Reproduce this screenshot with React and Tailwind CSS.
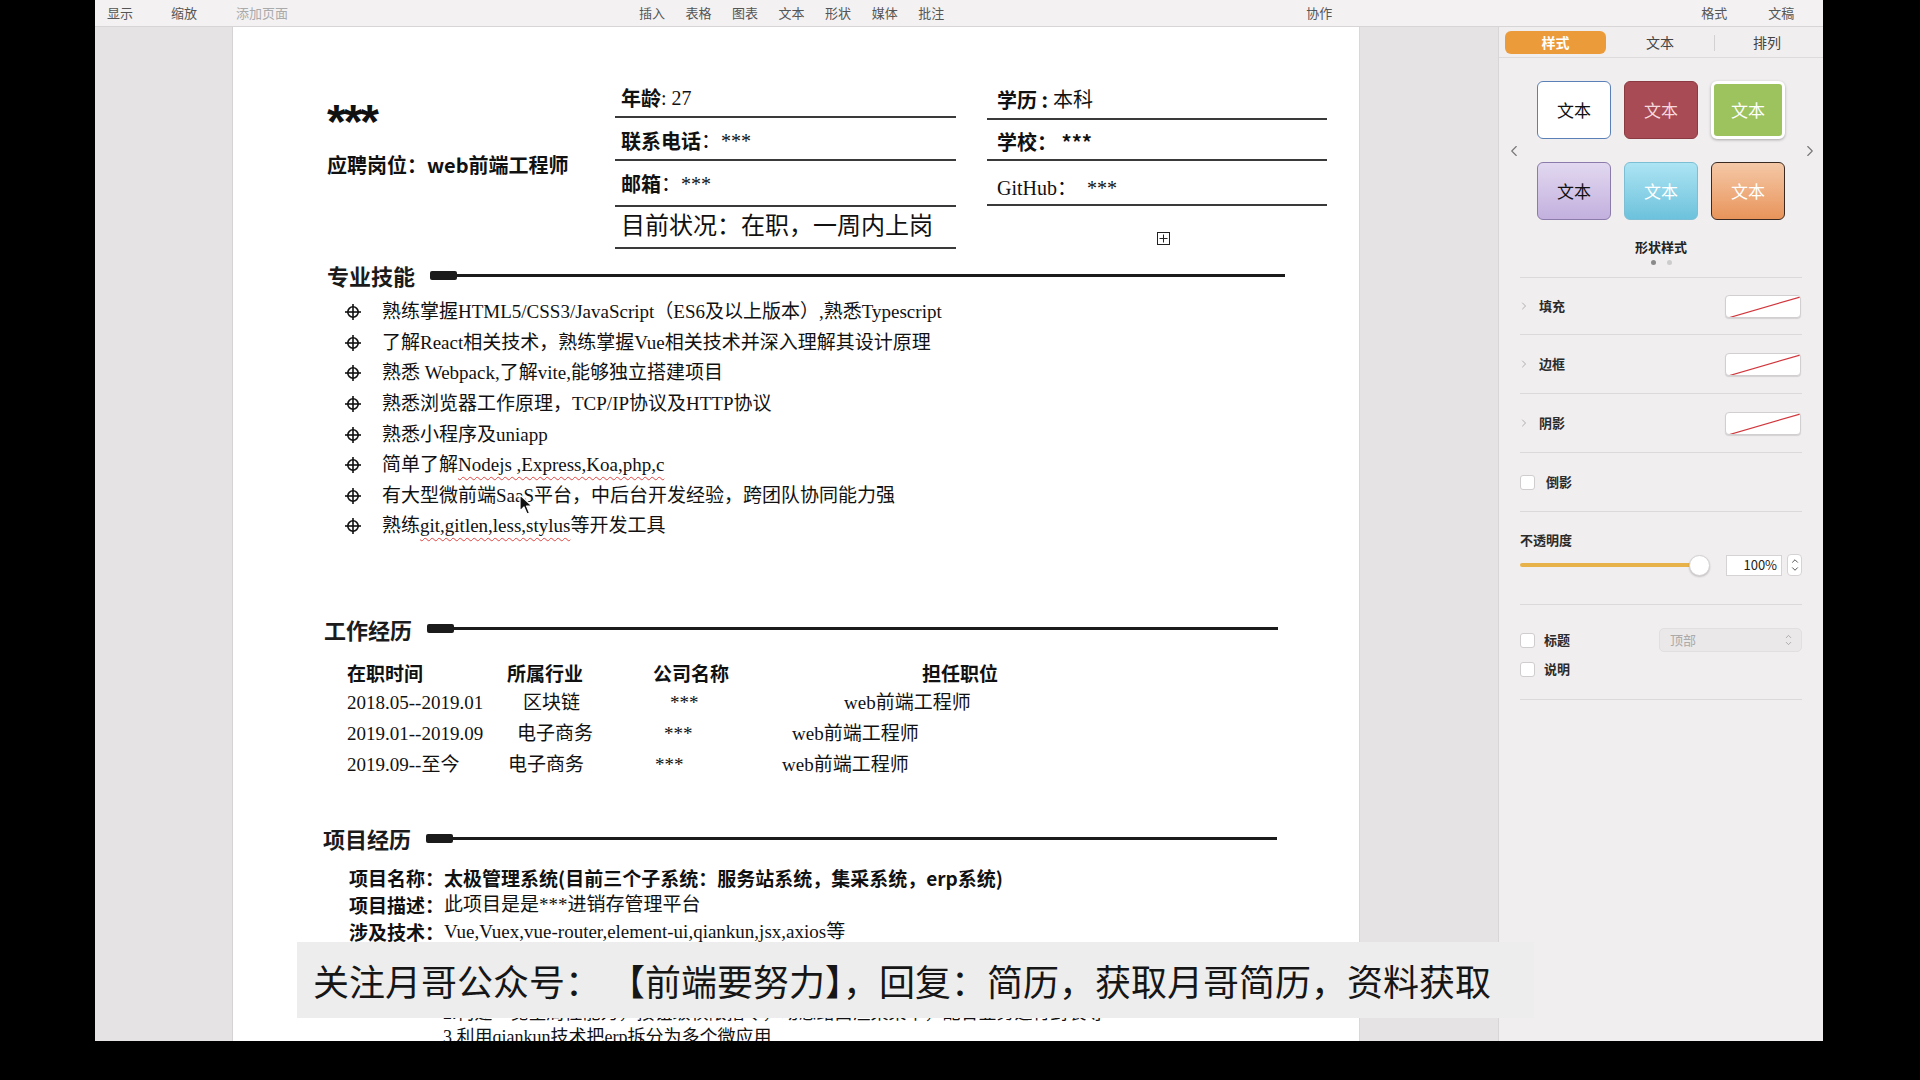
import React from "react";
import { ChevronLeft, ChevronRight, ChevronUp, ChevronDown } from "lucide-react";

const sans = "font-['Noto_Sans_CJK_SC',sans-serif]";
const serif = "font-['Liberation_Serif','Noto_Sans_CJK_SC',serif]";
const wavy = "underline decoration-wavy decoration-[#e0433f] decoration-1 underline-offset-[5px]";

const Bullet = () => (
  <svg width="18" height="18" viewBox="0 0 18 18" className="shrink-0">
    <circle cx="9" cy="9" r="5.2" fill="none" stroke="#111" strokeWidth="1.6" />
    <line x1="1" y1="9" x2="17" y2="9" stroke="#111" strokeWidth="1.6" />
    <line x1="9" y1="1" x2="9" y2="17" stroke="#111" strokeWidth="1.6" />
  </svg>
);

const SectionTitle = ({ title, ml, lineEnd }) => (
  <div className={`flex items-center h-[30px] ${ml}`}>
    <span className={`${sans} text-[22px] font-bold text-[#1b1b1b] leading-[30px]`}>{title}</span>
    <div className="ml-[15px] w-[27px] h-[9px] rounded-[2px] bg-[#1b1b1b]"></div>
    <div className={`h-[3px] bg-[#1b1b1b] ${lineEnd}`}></div>
  </div>
);

const Toolbar = () => (
  <div className={`h-[27px] shrink-0 bg-[#f3f1f2] border-b border-[#d8d5d6] flex items-center pl-[12px] text-[13px] text-[#555] ${sans}`}>
    <span>显示</span>
    <span className="ml-[38px]">缩放</span>
    <span className="ml-[39px] text-[#aaa]">添加页面</span>
    <div className="ml-[351px] flex gap-[20.5px]">
      <span>插入</span>
      <span>表格</span>
      <span>图表</span>
      <span>文本</span>
      <span>形状</span>
      <span>媒体</span>
      <span>批注</span>
    </div>
    <span className="ml-[362px]">协作</span>
    <span className="ml-[369px]">格式</span>
    <span className="ml-[41px]">文稿</span>
  </div>
);

const skills = [
  <>熟练掌握HTML5/CSS3/JavaScript（ES6及以上版本）,熟悉Typescript</>,
  <>了解React相关技术，熟练掌握Vue相关技术并深入理解其设计原理</>,
  <>熟悉 Webpack,了解vite,能够独立搭建项目</>,
  <>熟悉浏览器工作原理，TCP/IP协议及HTTP协议</>,
  <>熟悉小程序及uniapp</>,
  <>简单了解<span className={wavy}>Nodejs ,Express,Koa,php,c</span></>,
  <>有大型微前端SaaS平台，中后台开发经验，跨团队协同能力强</>,
  <>熟练<span className={wavy}>git,gitlen,less,stylus</span>等开发工具</>,
];

const Page = () => (
  <div className="w-[1126px] h-full bg-white shrink-0 relative overflow-hidden text-[#111]">
    {/* header */}
    <div className="flex pt-[45px]">
      <div className="w-[382px] pl-[94px] flex flex-col">
        <div className="mt-[20px] h-[41px] leading-[60px] text-[48px] font-bold font-['Liberation_Sans',sans-serif] tracking-[-2px]">***</div>
        <div className={`mt-[18px] h-[28px] leading-[28px] text-[20px] font-bold ${sans}`}>应聘岗位：web前端工程师</div>
      </div>
      <div className="mt-[2px] w-[341px] flex flex-col">
        <div className="h-[44px] border-b-2 border-[#3a3a3a] flex items-end pb-[6px] pl-[6px] leading-[24px] text-[20px]">
          <span className={`${sans} font-bold`}>年龄</span>
          <span className={serif}>: 27</span>
        </div>
        <div className="h-[43px] border-b-2 border-[#3a3a3a] flex items-end pb-[6px] pl-[6px] leading-[24px] text-[20px]">
          <span className={`${sans} font-bold`}>联系电话</span>
          <span className={serif}>：***</span>
        </div>
        <div className="h-[46px] border-b-2 border-[#3a3a3a] flex items-end pb-[9px] pl-[6px] leading-[24px] text-[20px]">
          <span className={`${sans} font-bold`}>邮箱</span>
          <span className={serif}>：***</span>
        </div>
        <div className={`h-[42px] border-b-2 border-[#3a3a3a] flex items-end pb-[7px] pl-[6px] leading-[28px] text-[24px] ${serif}`}>
          目前状况：在职，一周内上岗
        </div>
      </div>
      <div className="mt-[2px] ml-[31px] w-[340px] flex flex-col">
        <div className="h-[46px] border-b-2 border-[#3a3a3a] flex items-end pb-[6px] pl-[10px] leading-[24px] text-[20px]">
          <span className={`${sans} font-bold`}>学历 :</span>
          <span className={serif}>&nbsp;本科</span>
        </div>
        <div className="h-[41px] border-b-2 border-[#3a3a3a] flex items-end pb-[5px] pl-[10px] leading-[24px] text-[20px]">
          <span className={`${sans} font-bold`}>学校：&nbsp;***</span>
        </div>
        <div className={`h-[45px] border-b-2 border-[#3a3a3a] flex items-end pb-[4px] pl-[10px] leading-[24px] text-[20px] ${serif}`}>
          GitHub：&nbsp;&nbsp;***
        </div>
        <div className="mt-[26px] flex justify-center pl-[12px]">
          <div className="w-[13px] h-[13px] border border-[#222] flex items-center justify-center">
            <svg width="9" height="9" viewBox="0 0 9 9">
              <line x1="0.5" y1="4.5" x2="8.5" y2="4.5" stroke="#222" strokeWidth="1" />
              <line x1="4.5" y1="0.5" x2="4.5" y2="8.5" stroke="#222" strokeWidth="1" />
            </svg>
          </div>
        </div>
      </div>
    </div>

    {/* skills */}
    <div className="mt-[11px]">
      <SectionTitle title="专业技能" ml="ml-[94px]" lineEnd="w-[828px]" />
    </div>
    <div className="mt-[7px] flex flex-col">
      {skills.map((s, i) => (
        <div key={i} className="h-[30.6px] flex items-center pl-[111px]">
          <Bullet />
          <span className={`ml-[20px] text-[19px] leading-[24px] ${serif}`}>{s}</span>
        </div>
      ))}
    </div>

    {/* work */}
    <div className="mt-[72px]">
      <SectionTitle title="工作经历" ml="ml-[91px]" lineEnd="w-[824px]" />
    </div>
    <div className="mt-[14px] pl-[114px] flex flex-col text-[19px]">
      <div className={`h-[30.6px] flex items-center font-bold ${sans}`}>
        <span className="w-[160px] shrink-0">在职时间</span>
        <span className="w-[146px] shrink-0">所属行业</span>
        <span className="w-[269px] shrink-0">公司名称</span>
        <span>担任职位</span>
      </div>
      <div className={`h-[30.6px] flex items-center ${serif}`}>
        <span className="w-[176px] shrink-0">2018.05--2019.01</span>
        <span className="w-[147px] shrink-0">区块链</span>
        <span className="w-[174px] shrink-0">***</span>
        <span>web前端工程师</span>
      </div>
      <div className={`h-[30.6px] flex items-center ${serif}`}>
        <span className="w-[170px] shrink-0">2019.01--2019.09</span>
        <span className="w-[147px] shrink-0">电子商务</span>
        <span className="w-[128px] shrink-0">***</span>
        <span>web前端工程师</span>
      </div>
      <div className={`h-[30.6px] flex items-center ${serif}`}>
        <span className="w-[161px] shrink-0">2019.09--至今</span>
        <span className="w-[147px] shrink-0">电子商务</span>
        <span className="w-[127px] shrink-0">***</span>
        <span>web前端工程师</span>
      </div>
    </div>

    {/* projects */}
    <div className="mt-[43px]">
      <SectionTitle title="项目经历" ml="ml-[90px]" lineEnd="w-[824px]" />
    </div>
    <div className="mt-[12px] pl-[116px] flex flex-col text-[19px]">
      <div className={`h-[27px] flex items-center font-bold ${sans}`}>
        项目名称：太极管理系统(目前三个子系统：服务站系统，集采系统，erp系统)
      </div>
      <div className="h-[27px] flex items-center">
        <span className={`${sans} font-bold`}>项目描述：</span>
        <span className={serif}>此项目是是***进销存管理平台</span>
      </div>
      <div className="h-[27px] flex items-center">
        <span className={`${sans} font-bold`}>涉及技术：</span>
        <span className={`${serif} underline decoration-dotted decoration-[#e0433f] underline-offset-[4px]`}>
          Vue,Vuex,vue-router,element-ui,qiankun,jsx,axios
        </span>
        <span className={serif}>等</span>
      </div>
      <div className="h-[54px]"></div>
      <div className={`mt-[1px] pl-[94px] flex flex-col text-[18px] ${serif}`}>
        <div className="h-[24px] flex items-center">2.构建一览全局性能力，按钮级权限指令，动态路由渲染菜单，配合业务进行封装等</div>
        <div className="h-[24px] flex items-center">3.利用qiankun技术把erp拆分为多个微应用</div>
      </div>
    </div>

    {/* mouse cursor */}
    <svg className="absolute left-[286px] top-[467px]" width="14" height="22" viewBox="0 0 14 22">
      <path d="M1 1 L1 17 L5 13 L8 20 L10.5 19 L7.5 12 L13 12 Z" fill="#111" stroke="#fff" strokeWidth="1.2" strokeLinejoin="round" />
    </svg>
  </div>
);

const Swatch = () => (
  <div className="w-[76px] h-[23px] rounded-[4px] bg-white border border-[#d2cfd0] shadow-[0_1px_1px_rgba(0,0,0,0.12)] overflow-hidden">
    <svg width="76" height="23" viewBox="0 0 76 23">
      <line x1="2" y1="22" x2="74" y2="1" stroke="#d0373d" strokeWidth="1.2" />
    </svg>
  </div>
);

const Check = () => (
  <div className="w-[15px] h-[15px] rounded-[3px] bg-white border border-[#d0cdce] shrink-0"></div>
);

const styleBtns = [
  "bg-white border-[1.5px] border-[#5b80b8] text-[#111]",
  "bg-[#a94b54] border border-[#8c3a42] text-[#f5d9dc]",
  "bg-[#9dc35e] border-[3px] border-white shadow-[0_1px_3px_rgba(0,0,0,0.3)] text-white",
  "bg-gradient-to-b from-[#e2d8f0] to-[#c3b0de] border border-[#8b7bab] text-[#111]",
  "bg-gradient-to-b from-[#ace4f3] to-[#6cc2dc] border border-[#7cbfd4] text-white",
  "bg-gradient-to-b from-[#f4c8a6] to-[#e8945a] border-[1.5px] border-[#3a2a22] text-white",
];

const Panel = () => (
  <div className={`w-[325px] h-full bg-[#f1eeef] border-l border-[#d9d6d7] shrink-0 flex flex-col text-[13px] text-[#2b2b2b] ${sans}`}>
    <div className="h-[31px] flex items-start pt-[4px] pl-[6px] border-b border-[#dedbdc] shrink-0">
      <div className="w-[101px] h-[23px] rounded-[6px] bg-[#ec9b3b] text-white font-bold text-[14px] flex items-center justify-center">样式</div>
      <div className="w-[108px] h-[23px] flex items-center justify-center text-[14px] text-[#444]">文本</div>
      <div className="w-px h-[16px] mt-[4px] bg-[#d4d1d2]"></div>
      <div className="w-[104px] h-[23px] flex items-center justify-center text-[14px] text-[#444]">排列</div>
    </div>
    <div className="mt-[23px] flex items-center">
      <div className="w-[30px] flex justify-center text-[#777]">
        <ChevronLeft size={18} strokeWidth={1.5} />
      </div>
      <div className="ml-[8px] grid grid-cols-[74px_74px_74px] gap-x-[13px] gap-y-[23px]">
        {styleBtns.map((c, i) => (
          <div key={i} className={`h-[58px] rounded-[6px] flex items-center justify-center text-[17px] ${c}`}>文本</div>
        ))}
      </div>
      <div className="ml-[12px] w-[26px] flex justify-center text-[#777]">
        <ChevronRight size={18} strokeWidth={1.5} />
      </div>
    </div>
    <div className="mt-[18px] h-[18px] leading-[18px] text-center font-bold text-[13px] text-[#222]">形状样式</div>
    <div className="mt-[4px] flex justify-center gap-[11px]">
      <div className="w-[5px] h-[5px] rounded-full bg-[#8a8a8a]"></div>
      <div className="w-[5px] h-[5px] rounded-full bg-[#cccccc]"></div>
    </div>
    <div className="mx-[21px] mt-[12px] flex flex-col">
      <div className="border-t border-[#dcd9da]"></div>
      {["填充", "边框", "阴影"].map((t, i) => (
        <div key={t} className={`${i === 0 ? "h-[57px]" : "h-[59px]"} flex items-center border-b border-[#dcd9da]`}>
          <ChevronRight size={12} strokeWidth={1.5} className="text-[#999] ml-[-2px]" />
          <span className="ml-[9px] font-bold">{t}</span>
          <div className="ml-auto mr-[1px]">
            <Swatch />
          </div>
        </div>
      ))}
      <div className="h-[59px] flex items-center border-b border-[#dcd9da]">
        <Check />
        <span className="ml-[11px] font-bold">倒影</span>
      </div>
      <div className="h-[93px] flex flex-col border-b border-[#dcd9da]">
        <div className="mt-[19px] h-[18px] leading-[18px] font-bold">不透明度</div>
        <div className="mt-[5px] flex items-center">
          <div className="relative w-[190px] h-[22px] flex items-center">
            <div className="w-[179px] h-[4px] rounded-full bg-[#e8b24a]"></div>
            <div className="absolute left-[169px] w-[21px] h-[21px] rounded-full bg-white border border-[#d4d1d2] shadow-[0_1px_2px_rgba(0,0,0,0.2)]"></div>
          </div>
          <div className="ml-[17px] w-[57px] h-[21px] bg-white border border-[#d6d3d4] flex items-center justify-end pr-[4px] text-[13px] text-[#222]">100%</div>
          <div className="ml-[5px] w-[15px] h-[22px] rounded-[4px] bg-white border border-[#d6d3d4] flex flex-col items-center justify-center text-[#333]">
            <ChevronUp size={10} strokeWidth={2} className="-mb-[1px]" />
            <ChevronDown size={10} strokeWidth={2} className="-mt-[1px]" />
          </div>
        </div>
      </div>
      <div className="h-[95px] flex flex-col border-b border-[#dcd9da] relative">
        <div className="mt-[26px] h-[18px] flex items-center">
          <Check />
          <span className="ml-[9px] font-bold">标题</span>
          <div className="ml-auto w-[143px] h-[24px] rounded-[5px] bg-[#ebe8e9] border border-[#e2dfe0] flex items-center pl-[10px] pr-[8px] text-[#aaa]">
            <span>顶部</span>
            <div className="ml-auto flex flex-col text-[#999]">
              <ChevronUp size={9} strokeWidth={2} className="-mb-[1px]" />
              <ChevronDown size={9} strokeWidth={2} className="-mt-[1px]" />
            </div>
          </div>
        </div>
        <div className="mt-[11px] h-[18px] flex items-center">
          <Check />
          <span className="ml-[9px] font-bold">说明</span>
        </div>
      </div>
    </div>
  </div>
);

export default function App() {
  return (
    <div className="w-[1920px] h-[1080px] bg-black relative overflow-hidden">
      <div className="ml-[95px] w-[1728px] h-[1041px] flex flex-col bg-[#e6e3e4] overflow-hidden">
        <Toolbar />
        <div className="flex flex-1 min-h-0">
          <div className="w-[138px] h-full shrink-0 bg-[#e6e3e4] border-r border-[#d6d3d4]"></div>
          <Page />
          <div className="w-[139px] h-full shrink-0 bg-[#e6e3e4] border-l border-[#dad7d8]"></div>
          <Panel />
        </div>
      </div>
      <div className={`absolute left-[297px] top-[942px] w-[1237px] h-[76px] bg-[#ededed] flex items-center pl-[16px] text-[36px] text-[#161616] ${sans}`}>
        关注月哥公众号：&nbsp;【前端要努力】，回复：简历，获取月哥简历，资料获取
      </div>
    </div>
  );
}
